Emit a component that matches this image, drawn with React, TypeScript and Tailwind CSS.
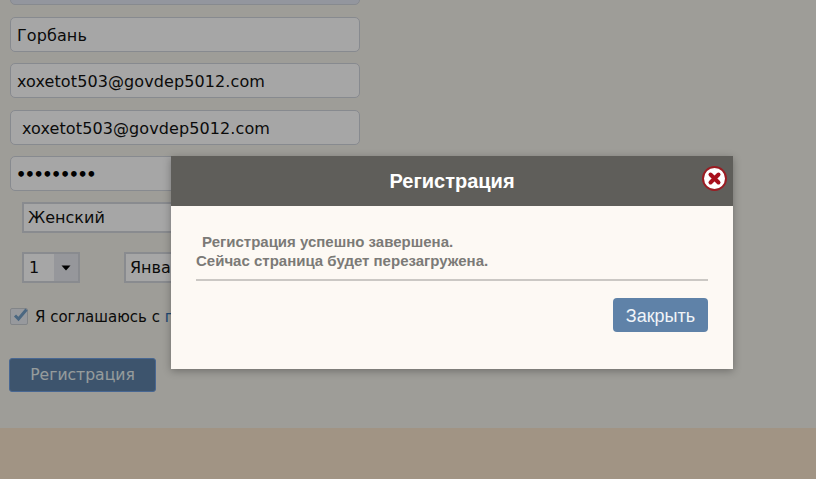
import React from "react";

const inputCls =
  "block w-[350px] h-[35px] shrink-0 rounded-[5px] border border-[#d0d4dc] bg-white text-[16px] leading-[35px] font-['DejaVu_Sans',sans-serif] overflow-hidden whitespace-nowrap";

export default function App() {
  return (
    <div className="relative w-[816px] h-[479px] overflow-hidden bg-[#f3f1ea] font-['DejaVu_Sans',sans-serif]">
      <div className="h-[428px] pl-[10px] flex flex-col">
        <div className="w-[350px] h-[35px] mt-[-30px] shrink-0 rounded-[5px] border border-[#d0d4dc] bg-[#e2e7f3]" />
        <div className={inputCls + " mt-[12px] pl-[6px] text-[#111] tracking-[0.1px]"}>Горбань</div>
        <div className={inputCls + " mt-[11px] pl-[6px] text-[#111] tracking-[0.1px]"}>xoxetot503@govdep5012.com</div>
        <div className={inputCls + " mt-[12px] pl-[11px] text-[#111] tracking-[0.1px]"}>xoxetot503@govdep5012.com</div>
        <div className={inputCls + " mt-[11px] pl-[5px] text-black font-bold tracking-[-1.45px]"}>•••••••••</div>

        <div className="ml-[12px] mt-[11px] w-[300px] h-[31px] shrink-0 border-2 border-[#d3d6dc] bg-white pl-[4px] text-[16px] leading-[28px] text-[#111]">
          Женский
        </div>

        <div className="ml-[12px] mt-[19px] flex shrink-0 gap-[44px]">
          <div className="w-[58px] h-[31px] border-2 border-[#d3d6dc] bg-white flex text-[16px] leading-[28px] text-[#111]">
            <span className="w-[30px] pl-[5px]">1</span>
            <span className="flex-1 bg-[#e6e9ee] flex items-center justify-center">
              <svg width="10" height="6" viewBox="0 0 10 6">
                <path d="M0.5 0.5h9L5 5.5z" fill="#000" />
              </svg>
            </span>
          </div>
          <div className="w-[180px] h-[31px] border-2 border-[#d3d6dc] bg-white pl-[4px] text-[16px] leading-[28px] text-[#111]">
            Январь
          </div>
        </div>

        <div className="mt-[24px] flex items-center shrink-0 h-[18px] text-[15px] text-[#111]">
          <span className="relative w-[18px] h-[17px] rounded-[2px] border border-[#c8ccd2] bg-[#e8ecf2]">
            <svg className="absolute left-[1px] top-[-3px]" width="18" height="18" viewBox="0 0 18 18">
              <path d="M3 9.5l3.5 3.5L14.5 3.5" fill="none" stroke="#749fc6" strokeWidth="3" />
            </svg>
          </span>
          <span className="ml-[7px] mt-[2px] whitespace-nowrap">
            Я соглашаюсь с <span className="text-[#2f6fb0]">правилами</span>
          </span>
        </div>

        <div className="ml-[-1px] mt-[33px] w-[147px] h-[34px] shrink-0 rounded-[3px] border border-[#6f9fe0] bg-[#5f82a8] text-center text-[15.6px] leading-[32px] text-[#e6f0f0]">
          Регистрация
        </div>
      </div>
      <div className="h-[51px] bg-[#f8e4cb]" />

      <div className="absolute inset-0 bg-black/35" />

      <div className="absolute left-[171px] top-[156px] w-[562px] h-[213px] bg-[#fdf9f4] shadow-[0_2px_8px_rgba(0,0,0,0.3)] font-['Liberation_Sans',sans-serif]">
        <div className="relative h-[50px] bg-[#5f5e5a] text-center text-[20px] font-bold leading-[50px] text-white">
          Регистрация
          <span className="absolute left-[531px] top-[10px] w-[25px] h-[25px]">
            <svg width="25" height="25" viewBox="0 0 25 25">
              <circle cx="12.5" cy="12.5" r="11.5" fill="#fff" stroke="#9a1c22" strokeWidth="2" />
              <path d="M8.5 8.5l8 8M16.5 8.5l-8 8" stroke="#a8101c" strokeWidth="4" strokeLinecap="round" />
            </svg>
          </span>
        </div>
        <div className="px-[25px] pt-[26px]">
          <div className="border-b-2 border-[#cbc8c4] pb-[9px] text-[15px] font-bold leading-[19px] text-[#7b7a77]">
            <div className="pl-[6px]">Регистрация успешно завершена.</div>
            <div>Сейчас страница будет перезагружена.</div>
          </div>
          <div className="mt-[17px] flex justify-end">
            <div className="w-[95px] h-[34px] rounded-[4px] bg-[#5f82a8] text-center text-[18px] leading-[36px] text-[#f0f4f8]">
              Закрыть
            </div>
          </div>
        </div>
      </div>
    </div>
  );
}
